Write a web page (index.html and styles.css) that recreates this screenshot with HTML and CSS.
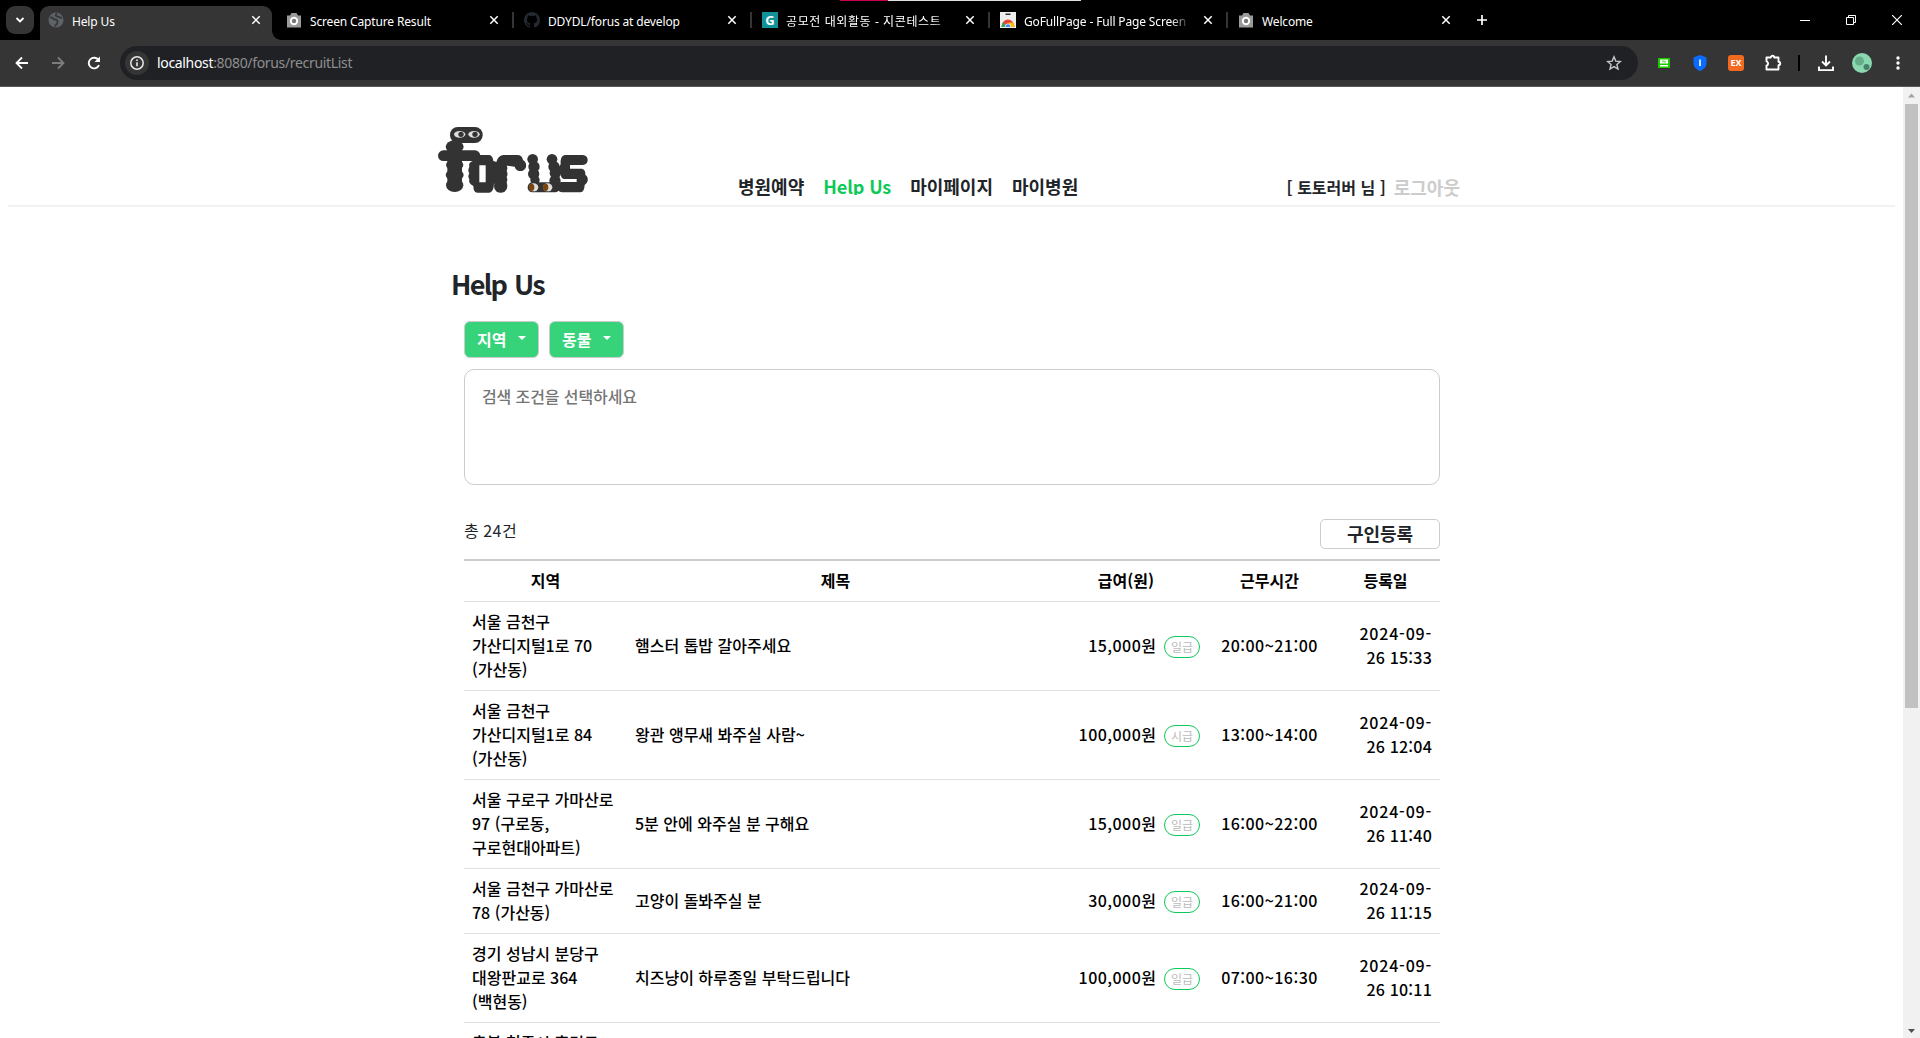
FILE: index.html
```html
<!DOCTYPE html>
<html lang="ko">
<head>
    <meta charset="UTF-8">
    <meta name="viewport" content="width=device-width, initial-scale=1.0">
    <title>Help Us</title>
    <link rel="stylesheet" href="styles.css">
</head>
<body>
    <svg class="defs">
        <symbol id="i-close" viewBox="0 0 10 10"><path d="M1.3 1.3l7.4 7.4M8.7 1.3L1.3 8.7" stroke="#fff" stroke-width="1.5" fill="none"/></symbol>
        <symbol id="i-camera" viewBox="0 0 16 16"><path d="M1 3.5h3l1.5-2.5h5L12 3.5h3v12H1z" fill="#9b9b9b"/><circle cx="8" cy="9" r="4.200" fill="#fff"/><circle cx="8" cy="9" r="2.2" fill="#777"/></symbol>
    </svg>

    <div class="tabstrip">
        <div class="tab-search"><svg width="10" height="10" viewBox="0 0 10 10"><path d="M1.5 3l3.5 3.5L8.500 3" fill="none" stroke="#fff" stroke-width="1.8"/></svg></div>
        <div class="tab active">
            <svg class="favicon" viewBox="0 0 16 16"><circle cx="8" cy="8" r="7.500" fill="#5f6368"/><path d="M2 5.500c3-.5 3 2 5 2s3 1 2.500 3-2 2-2.500 4M9 1.500c-2 1-1.500 3 .5 3s2.500 1.500 4.500 1.500" fill="none" stroke="#35363a" stroke-width="1.8"/></svg>
            <span class="tab-title">Help Us</span>
            <svg class="close"><use href="#i-close"/></svg>
        </div>
        <div class="tab">
            <svg class="favicon"><use href="#i-camera"/></svg>
            <span class="tab-title">Screen Capture Result</span>
            <svg class="close"><use href="#i-close"/></svg>
        </div>
        <div class="tab sep">
            <svg class="favicon" viewBox="0 0 16 16"><path fill="#24292f" d="M8 0C3.580 0 0 3.580 0 8c0 3.540 2.290 6.530 5.470 7.590.4.070.55-.17.55-.38v-1.490c-2.010.37-2.530-.49-2.690-.94-.09-.23-.48-.94-.82-1.130-.28-.15-.68-.52-.01-.53.63-.01 1.080.58 1.230.82.72 1.210 1.870.87 2.330.66.07-.52.28-.87.51-1.070-1.780-.2-3.640-.89-3.640-3.950 0-.87.31-1.590.82-2.150-.08-.2-.36-1.020.08-2.120 0 0 .67-.21 2.200.82.64-.18 1.320-.27 2-.27s1.360.09 2 .27c1.530-1.040 2.200-.82 2.200-.82.44 1.100.16 1.920.08 2.120.51.56.82 1.270.82 2.150 0 3.070-1.870 3.750-3.650 3.950.29.25.54.73.54 1.480v2.200c0 .21.15.46.55.38A8.010 8.010 0 0 0 16 8c0-4.420-3.580-8-8-8z"/></svg>
            <span class="tab-title">DDYDL/forus at develop</span>
            <svg class="close"><use href="#i-close"/></svg>
        </div>
        <div class="tab sep">
            <span class="favicon g-icon">G</span>
            <span class="tab-title fade ko-title">공모전 대외활동 - 지콘테스트</span>
            <svg class="close"><use href="#i-close"/></svg>
        </div>
        <div class="tab sep">
            <svg class="favicon" viewBox="0 0 16 16"><path d="M0 0h16v16H0z" fill="#eee"/><path d="M5.500 1.500h5V3h-5z" fill="#333"/><path d="M1.500 15a6.500 7.500 0 0 1 13 0z" fill="#ea4335"/><path d="M1.500 15a6.500 7.500 0 0 1 1.500-5l4 5z" fill="#34a853"/><path d="M14.500 15a6.500 7.500 0 0 0-1.500-4.500H9V15z" fill="#fbbc04"/><path d="M4.800 15a3.200 3.500 0 0 1 6.400 0z" fill="#fff"/><path d="M5.500 15a2.500 2.800 0 0 1 5 0z" fill="#4285f4"/></svg>
            <span class="tab-title fade">GoFullPage - Full Page Screen</span>
            <svg class="close"><use href="#i-close"/></svg>
        </div>
        <div class="tab sep">
            <svg class="favicon"><use href="#i-camera"/></svg>
            <span class="tab-title">Welcome</span>
            <svg class="close"><use href="#i-close"/></svg>
        </div>
        <div class="new-tab"><svg width="12" height="12" viewBox="0 0 12 12"><path d="M6 1v10M1 6h10" stroke="#fff" stroke-width="1.700"/></svg></div>
        <div class="window-controls">
            <svg width="10" height="10" viewBox="0 0 10 10"><path d="M0 5.500h10" stroke="#fff"/></svg>
            <svg width="10" height="10" viewBox="0 0 10 10"><path d="M.5 2.500h7v7h-7zM2.500 2.500v-2h7v7h-2" fill="none" stroke="#fff"/></svg>
            <svg width="10" height="10" viewBox="0 0 10 10"><path d="M0 0l10 10M10 0L0 10" stroke="#fff" stroke-width="1.200"/></svg>
        </div>
        <div class="top-line"></div>
    </div>

    <div class="toolbar">
        <div class="nav-icons">
            <svg width="16" height="16" viewBox="0 0 16 16"><path d="M14 8H2.500M8 2.500L2.500 8 8 13.500" fill="none" stroke="#fff" stroke-width="1.800"/></svg>
            <svg width="16" height="16" viewBox="0 0 16 16"><path d="M2 8h11.500M8 2.500L13.500 8 8 13.500" fill="none" stroke="#7d7d7d" stroke-width="1.800"/></svg>
            <svg width="16" height="16" viewBox="0 0 16 16"><path d="M13 10a5.300 5.300 0 1 1-.5-4.800" fill="none" stroke="#fff" stroke-width="1.900"/><path d="M14 1.500v5.500H8.500z" fill="#fff"/></svg>
        </div>
        <div class="omnibox">
            <span class="info"><svg width="16" height="16" viewBox="0 0 16 16"><circle cx="8" cy="8" r="6.200" fill="none" stroke="#e8e8e8" stroke-width="1.500"/><path d="M8 7.200v4M8 4.500v1.600" stroke="#e8e8e8" stroke-width="1.600"/></svg></span>
            <span class="url"><b>localhost</b>:8080/forus/recruitList</span>
            <svg class="star" width="16" height="16" viewBox="0 0 16 16"><path d="M8 1.800l1.800 4.300 4.600.4-3.500 3 1.100 4.500L8 11.600 4 14l1.100-4.500-3.500-3 4.600-.4z" fill="none" stroke="#c7c7c7" stroke-width="1.400"/></svg>
        </div>
        <div class="extensions">
            <svg class="ext" width="16" height="16" viewBox="0 0 16 16"><path d="M2 3h12v10H2z" fill="#1ec800"/><path d="M4 4.500h8v4H4zM4 10h8v1.500H4z" fill="#fff"/><path d="M7 7.500v-2l2 2v-2" fill="none" stroke="#1ec800" stroke-width=".8"/></svg>
            <svg class="ext" width="16" height="18" viewBox="0 0 16 18"><path d="M8 1l6.500 2.500V9c0 4-3 6.500-6.500 8-3.500-1.500-6.500-4-6.500-8V3.500z" fill="#0a6cff"/><path d="M8 5.500v6.500" stroke="#fff" stroke-width="1.600"/></svg>
            <span class="ext ex-icon">EX</span>
            <svg width="18" height="18" viewBox="0 0 18 18"><path d="M2.500 3.500h4.300a1.700 1.700 0 0 1 3.400 0h4.300v4.300a1.700 1.700 0 0 1 0 3.400v4.300h-12v-3.800a2.300 2.300 0 0 0 0-4.400z" fill="none" stroke="#fff" stroke-width="1.900" stroke-linejoin="round"/></svg>
            <span class="divider"></span>
            <svg width="18" height="18" viewBox="0 0 18 18"><path d="M9 1.500v9.500M5 7.500l4 4 4-4M2 12.500v3.600h14v-3.600" fill="none" stroke="#fff" stroke-width="1.900"/></svg>
            <svg width="20" height="20" viewBox="0 0 20 20"><circle cx="10" cy="10" r="10" fill="#8ad8b0"/><circle cx="7.500" cy="8" r="4.500" fill="#66ad8b"/><circle cx="14.500" cy="14" r="3" fill="#477f68"/></svg>
            <svg class="dots" width="16" height="16" viewBox="0 0 16 16" fill="#fff"><circle cx="8" cy="3" r="1.700"/><circle cx="8" cy="8" r="1.700"/><circle cx="8" cy="13" r="1.700"/></svg>
        </div>
    </div>

    <div class="viewport">
        <div class="page">
            <header class="header">
                <div class="header-inner">
                    <svg class="logo" viewBox="48 45 462 207">
                        <g fill="#333">
                            <rect x="90" y="51" width="98" height="48" rx="23"/>
                            <ellipse cx="104" cy="110" rx="27" ry="19"/>
                            <rect x="54" y="121" width="127" height="32" rx="16"/>
                            <rect x="82" y="115" width="44" height="120"/>
                            <ellipse cx="104" cy="165" rx="26" ry="17"/>
                            <ellipse cx="104" cy="195" rx="27" ry="18"/>
                            <ellipse cx="104" cy="226" rx="26" ry="20"/>
                            <path fill-rule="evenodd" d="M172 135h36q10 2 12 18l12 4v60l-10 5q-2 26-14 26h-36q-12 0-12-20-16-8-12-20-6-8 0-18-6-8 0-20-4-14 12-18 0-15 12-17zM178 166v51h19v-51z"/>
                            <path d="M250 135h42q14 0 17 15 13 8 8 24-6 11-20 9-9-2-13-13l-24-3q4 8 0 16 5 9 0 18 4 9 0 16 6 20-6 28-12 6-24 0-12-9-6-26-4-9 0-18-4-10 0-18-6-14 4-22 4-24 22-26z"/>
                            <circle cx="338" cy="148" r="16"/>
                            <circle cx="342" cy="170" r="17"/>
                            <circle cx="341" cy="192" r="17"/>
                            <circle cx="345" cy="210" r="14"/>
                            <circle cx="396" cy="148" r="16"/>
                            <circle cx="402" cy="170" r="17"/>
                            <circle cx="406" cy="190" r="17"/>
                            <circle cx="405" cy="212" r="17"/>
                            <rect x="323" y="217" width="96" height="30" rx="14"/>
                            <path d="M440 135h48q15 1 15 15t-15 15h-38v11h36q11 3 10 18 9 6 7 18-2 9-9 13-1 21-12 22h-56q-14-1-15-15t13-16h46v-9h-36q-12-1-12-16-8-3-6-12 0-10 6-16-2-25 12-28z"/>
                        </g>
                        <g fill="#ddd">
                            <ellipse cx="119" cy="73" rx="17" ry="10"/><ellipse cx="162" cy="73" rx="17" ry="10"/>
                            <ellipse cx="341" cy="232" rx="14" ry="12"/><ellipse cx="383" cy="232" rx="14" ry="12"/>
                        </g>
                        <circle cx="123" cy="73" r="8" fill="#333"/><circle cx="165" cy="73" r="8" fill="#333"/>
                        <ellipse cx="335" cy="232" rx="8" ry="11" fill="#7a420c"/><ellipse cx="377" cy="232" rx="8" ry="11" fill="#7a420c"/>
                    </svg>
                    <nav class="menu">
                        <a>병원예약</a>
                        <a class="on">Help Us</a>
                        <a>마이페이지</a>
                        <a>마이병원</a>
                    </nav>
                    <div class="user">
                        <span class="user-name">[ 토토러버 님 ]</span>
                        <a class="logout">로그아웃</a>
                    </div>
                </div>
            </header>

            <main class="content">
                <h1 class="title">Help Us</h1>
                <div class="filters">
                    <button class="filter">지역<i class="caret"></i></button>
                    <button class="filter">동물<i class="caret"></i></button>
                </div>
                <div class="conditions">검색 조건을 선택하세요</div>
                <div class="list-head">
                    <span class="total">총 <span class="num">24</span>건</span>
                    <button class="register">구인등록</button>
                </div>
                <table class="table">
                    <colgroup><col class="c-area"><col class="c-title"><col class="c-pay"><col class="c-time"><col class="c-date"></colgroup>
                    <thead>
                        <tr><th>지역</th><th>제목</th><th>급여(원)</th><th>근무시간</th><th>등록일</th></tr>
                    </thead>
                    <tbody>
                        <tr>
                            <td>서울 금천구<br>가산디지털1로 70<br>(가산동)</td>
                            <td>햄스터 톱밥 갈아주세요</td>
                            <td><div class="pay"><span><span class="num">15,000</span>원</span><span class="badge">일급</span></div></td>
                            <td class="time num">20:00~21:00</td>
                            <td class="date">2024-09-<br>26 15:33</td>
                        </tr>
                        <tr>
                            <td>서울 금천구<br>가산디지털1로 84<br>(가산동)</td>
                            <td>왕관 앵무새 봐주실 사람~</td>
                            <td><div class="pay"><span><span class="num">100,000</span>원</span><span class="badge">시급</span></div></td>
                            <td class="time num">13:00~14:00</td>
                            <td class="date">2024-09-<br>26 12:04</td>
                        </tr>
                        <tr>
                            <td>서울 구로구 가마산로<br>97 (구로동,<br>구로현대아파트)</td>
                            <td>5분 안에 와주실 분 구해요</td>
                            <td><div class="pay"><span><span class="num">15,000</span>원</span><span class="badge">일급</span></div></td>
                            <td class="time num">16:00~22:00</td>
                            <td class="date">2024-09-<br>26 11:40</td>
                        </tr>
                        <tr>
                            <td>서울 금천구 가마산로<br>78 (가산동)</td>
                            <td>고양이 돌봐주실 분</td>
                            <td><div class="pay"><span><span class="num">30,000</span>원</span><span class="badge">일급</span></div></td>
                            <td class="time num">16:00~21:00</td>
                            <td class="date">2024-09-<br>26 11:15</td>
                        </tr>
                        <tr>
                            <td>경기 성남시 분당구<br>대왕판교로 364<br>(백현동)</td>
                            <td>치즈냥이 하루종일 부탁드립니다</td>
                            <td><div class="pay"><span><span class="num">100,000</span>원</span><span class="badge">일급</span></div></td>
                            <td class="time num">07:00~16:30</td>
                            <td class="date">2024-09-<br>26 10:11</td>
                        </tr>
                        <tr>
                            <td>충북 청주시 흥덕구</td>
                            <td></td><td></td><td></td><td></td>
                        </tr>
                    </tbody>
                </table>
            </main>
        </div>
        <div class="scrollbar">
            <svg width="17" height="17" viewBox="0 0 17 17"><path d="M8.500 6.500l3.500 4H5z" fill="#a3a3a3"/></svg>
            <div class="thumb"></div>
            <svg class="down" width="17" height="17" viewBox="0 0 17 17"><path d="M8.500 12L12 8H5z" fill="#505050"/></svg>
        </div>
    </div>
</body>
</html>
```

FILE: styles.css
```css
* {
    box-sizing: border-box;
}
body {
    margin: 0;
    height: 1038px;
    overflow: hidden;
    font-family: "Noto Sans CJK KR", sans-serif;
    font-size: 16px;
    line-height: 24px;
    color: #212529;
    background: #fff;
}
svg {
    display: block;
    flex: none;
}
.defs {
    display: none;
}

/* browser tabs */
.tabstrip {
    position: relative;
    display: flex;
    height: 40px;
    background: #000;
    color: #fff;
    font-family: "Noto Sans", "Noto Sans CJK KR", sans-serif;
    font-size: 12px;
}
.tab-search {
    display: flex;
    align-items: center;
    justify-content: center;
    width: 28px;
    height: 28px;
    margin: 6px 6px 0;
    border-radius: 9px;
    background: #353535;
}
.tab {
    position: relative;
    display: flex;
    align-items: center;
    width: 232px;
    height: 34px;
    margin: 6px 6px 0 0;
    padding: 0 11px 6px 8px;
}
.tab.active {
    background: #353535;
    border-radius: 9px 9px 0 0;
}
.tab.active::after {
    content: "";
    position: absolute;
    left: 100%;
    bottom: 0;
    width: 9px;
    height: 9px;
    background: radial-gradient(circle at 100% 0, #000 8.5px, #353535 9px);
}
.tab.sep::before {
    content: "";
    position: absolute;
    left: -4px;
    top: 6px;
    width: 2px;
    height: 16px;
    background: #353535;
}
.favicon {
    flex: none;
    width: 16px;
    height: 16px;
    margin-right: 8px;
}
.g-icon {
    background: #129299;
    font-weight: bold;
    font-size: 13px;
    line-height: 16px;
    text-align: center;
}
.tab-title {
    flex: 1;
    overflow: hidden;
    white-space: nowrap;
    padding-top: 3px;
    letter-spacing: -0.15px;
}
.fade {
    margin-right: 12px;
    -webkit-mask-image: linear-gradient(90deg, #000 88%, transparent);
    mask-image: linear-gradient(90deg, #000 88%, transparent);
}
.ko-title {
    letter-spacing: 0.6px;
}
.close {
    width: 10px;
    height: 10px;
}
.new-tab {
    display: flex;
    align-items: center;
    padding-left: 8px;
}
.window-controls {
    display: flex;
    align-items: center;
    gap: 36px;
    margin: 0 18px 0 auto;
}
.top-line {
    position: absolute;
    top: 0;
    left: 840px;
    width: 241px;
    height: 1px;
    background: linear-gradient(90deg, #c4004f 48px, #e0e0e0 48px);
}

/* address bar */
.toolbar {
    display: flex;
    align-items: center;
    height: 47px;
    background: #353535;
    border-bottom: 1px solid #5a5a5a;
}
.nav-icons {
    display: flex;
    gap: 20px;
    width: 120px;
    padding-left: 14px;
}
.omnibox {
    display: flex;
    align-items: center;
    width: 1518px;
    height: 34px;
    padding: 0 16px 0 5px;
    border-radius: 17px;
    background: #202125;
}
.info {
    display: flex;
    align-items: center;
    justify-content: center;
    width: 24px;
    height: 24px;
    border-radius: 50%;
    background: #353535;
}
.url {
    margin-left: 8px;
    color: #8f8f8f;
    font: 14px/20px "Noto Sans", sans-serif;
    letter-spacing: -0.33px;
}
.url b {
    color: #fff;
    font-weight: normal;
}
.star {
    margin-left: auto;
}
.extensions {
    display: flex;
    align-items: center;
    gap: 17px;
    flex: 1;
    padding-left: 18px;
}
.ext {
    margin-right: 3px;
}
.ex-icon {
    width: 16px;
    height: 16px;
    border-radius: 3px;
    background: #f26a1f;
    color: #fff;
    font: bold 9px/16px "Noto Sans", sans-serif;
    text-align: center;
}
.divider {
    width: 2px;
    height: 16px;
    margin-left: -1px;
    background: #000;
}
.dots {
    margin-left: 1px;
}

/* page */
.viewport {
    display: flex;
    height: 951px;
}
.page {
    flex: 1;
    overflow: hidden;
}
.header {
    height: 120px;
    margin: 0 8px;
    border-bottom: 2px solid #f2f2f2;
}
.header-inner {
    display: flex;
    align-items: flex-end;
    width: 1031px;
    height: 108px;
    margin: 0 auto;
}
.logo {
    width: 154px;
    height: 69px;
    margin-bottom: 1px;
}
.menu {
    display: flex;
    gap: 19px;
    margin-left: 148px;
    font-size: 18px;
    font-weight: bold;
}
.menu a {
    height: 21px;
    line-height: 25px;
}
.menu .on {
    color: #0dc957;
    overflow: hidden;
    font-weight: bold;
    letter-spacing: -0.1px;
}
.user {
    display: flex;
    gap: 8px;
    margin-left: auto;
    margin-right: 7px;
    font-weight: bold;
    line-height: 26px;
    height: 21px;
}
.logout {
    color: #ccc;
    font-size: 18px;
}
.content {
    width: 976px;
    margin: 59px 0 0 464px;
}
.title {
    margin: 0 0 19px -13px;
    font-size: 27px;
    font-weight: bold;
    line-height: 36px;
    letter-spacing: -1.7px;
    word-spacing: 2px;
}
button {
    font-family: inherit;
    font-weight: bold;
    border: 1px solid #ccc;
}
.filters {
    display: flex;
    gap: 10px;
    margin-bottom: 11px;
}
.filter {
    display: flex;
    align-items: center;
    width: 75px;
    height: 37px;
    padding: 0 0 1px 12px;
    border-radius: 6px;
    background: #36d37b;
    color: #fff;
    font-size: 16px;
    white-space: nowrap;
}
.caret {
    margin: -3px 0 0 12px;
    border: 4px solid transparent;
    border-top-color: #fff;
    border-bottom: 0;
}
.conditions {
    height: 116px;
    padding: 14px 17px;
    border: 1px solid #ccc;
    border-radius: 10px;
    color: #757575;
    font-weight: 500;
    letter-spacing: -0.1px;
}
.list-head {
    display: flex;
    justify-content: space-between;
    height: 40px;
    margin-top: 34px;
}
.total {
    margin-top: -1px;
}
.register {
    width: 120px;
    height: 30px;
    padding: 0 0 2px;
    border-radius: 5px;
    background: #fff;
    color: #212529;
    font-size: 18px;
    line-height: 26px;
}
.table {
    width: 976px;
    table-layout: fixed;
    border-collapse: separate;
    border-spacing: 0;
    border-top: 2px solid #ccc;
    color: #000;
    font-weight: 500;
}
.c-area { width: 163px; }
.c-title { width: 417px; }
.c-pay { width: 164px; }
.c-time { width: 123px; }
.c-date { width: 109px; }
th, td {
    padding: 7px 8px 9px;
    border-bottom: 1px solid #dee2e6;
    vertical-align: middle;
    text-align: left;
}
th {
    text-align: center;
}
.pay {
    display: flex;
    justify-content: flex-end;
    align-items: center;
    gap: 8px;
}
.badge {
    width: 36px;
    height: 22px;
    margin-top: 3px;
    border: 1px solid #0dc957;
    border-radius: 11px;
    color: #bbb;
    font-size: 12px;
    font-weight: normal;
    line-height: 20px;
    text-align: center;
}
.num {
    letter-spacing: 0.45px;
}
td.time {
    padding-left: 0;
    padding-right: 0;
    text-align: center;
}
td.date {
    text-align: right;
    letter-spacing: 0.2px;
}
td.date::first-line {
    letter-spacing: 0.8px;
}

.scrollbar {
    width: 17px;
    background: #f1f1f1;
    display: flex;
    flex-direction: column;
}
.thumb {
    width: 13px;
    height: 604px;
    margin: 0 2px;
    background: #c1c1c1;
}
.down {
    margin-top: auto;
}
```
